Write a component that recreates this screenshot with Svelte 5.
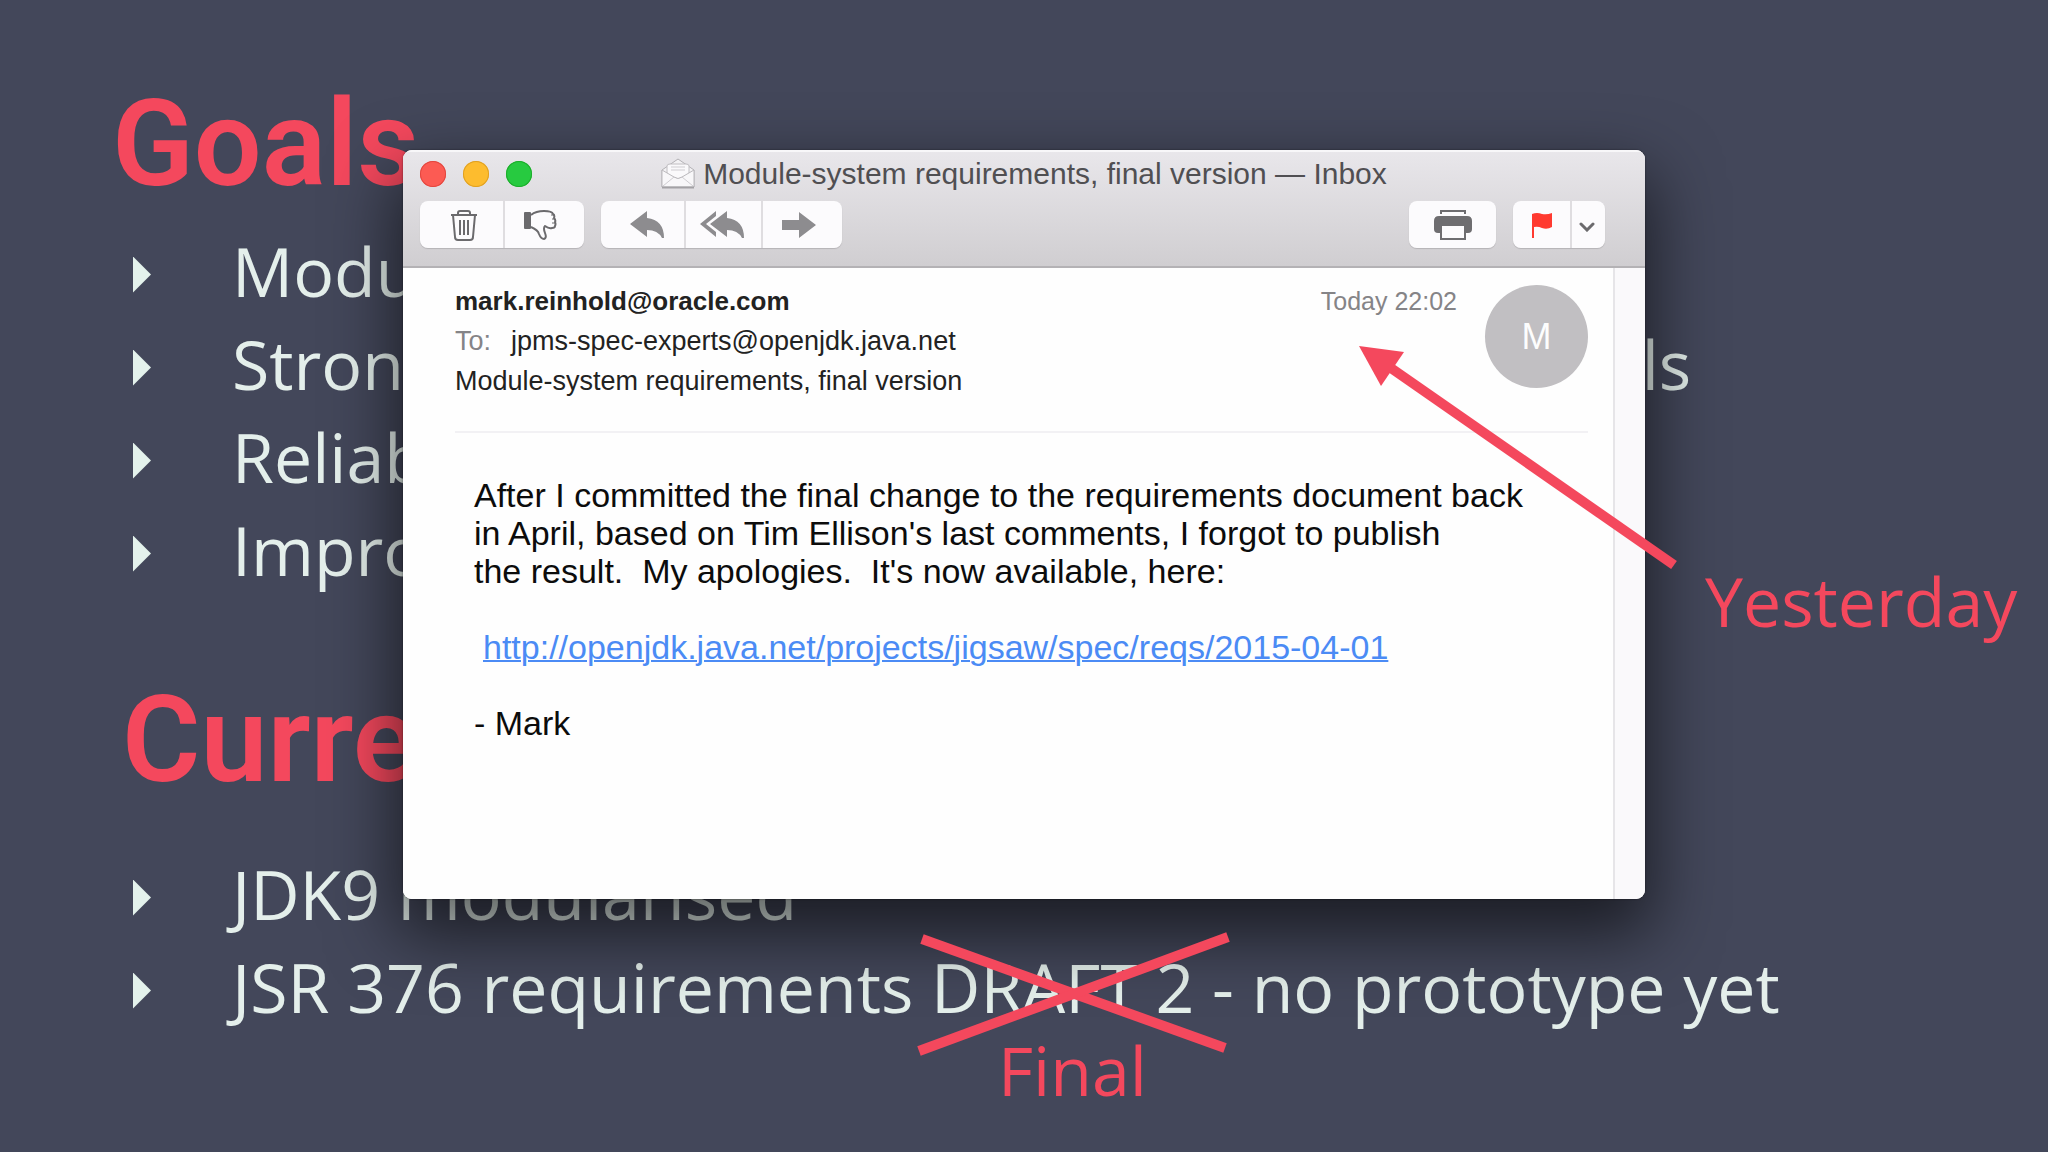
<script lang="ts">
  const goals = [
    "Modularity",
    "Strong encapsulation for all platform internals",
    "Reliable",
    "Improved",
  ];

  const paragraph = [
    "After I committed the final change to the requirements document back",
    "in April, based on Tim Ellison's last comments, I forgot to publish",
    "the result.  My apologies.  It's now available, here:",
  ].join("\n");

  const specUrl = "http://openjdk.java.net/projects/jigsaw/spec/reqs/2015-04-01";
</script>

<main class="slide">
  <section class="topic">
    <h1>Goals</h1>
    <ul>
      {#each goals as goal}
        <li>{goal}</li>
      {/each}
    </ul>
  </section>

  <section class="topic status">
    <h1>Current</h1>
    <ul>
      <li>JDK9 modularised</li>
      <li>JSR 376 requirements DRAFT 2 - no prototype yet</li>
    </ul>
  </section>

  <article class="window">
    <header class="chrome">
      <div class="titlebar">
        <div class="lights">
          <button class="light close" aria-label="Close"></button>
          <button class="light minimise" aria-label="Minimise"></button>
          <button class="light zoom" aria-label="Zoom"></button>
        </div>
        <h2>
          <svg width="34" height="32" viewBox="0 0 34 32" aria-hidden="true">
            <path d="M1 12 L17 1 L33 12 V29 H1Z" fill="#f3f2f4" stroke="#b3b1b5" />
            <path d="M6 17 V8 Q6 6 9 6 H25 Q28 6 28 8 V17 L17 21Z" fill="#faf9fb" stroke="#c0bec2" />
            <path d="M10 9 H24 M10 12 H24" stroke="#cfcdd1" />
            <path d="M1 12 L13 19 Q17 22 21 19 L33 12 V29 H1Z" fill="#f8f7f9" stroke="#bbb9bd" />
            <path d="M2 28 L13 19 M32 28 L21 19" stroke="#cfcdd1" fill="none" />
            <path d="M1 29.5 H33" stroke="#a3a1a5" stroke-width="2" />
          </svg>
          Module-system requirements, final version — Inbox
        </h2>
      </div>

      <div class="toolbar">
        <div class="group">
          <button class="trash" aria-label="Delete">
            <svg width="28" height="32" viewBox="0 0 28 32" fill="none" stroke="#6b6a6d" stroke-width="2">
              <path d="M1 6 H27" />
              <path d="M8 6 V4 Q8 2 10 2 H18 Q20 2 20 4 V6" />
              <path d="M3 6 L5 28 Q5 31 8 31 H20 Q23 31 23 28 L25 6" />
              <path d="M10 11 V26 M14 11 V26 M18 11 V26" />
            </svg>
          </button>
          <button class="junk" aria-label="Junk">
            <svg width="33" height="30" viewBox="0 0 33 30" fill="none" stroke="#6b6a6d" stroke-width="2" stroke-linejoin="round">
              <path d="M1 3 H6 V18 H1Z" fill="#6b6a6d" />
              <path d="M7 5 Q12 1 20 1 Q28 1 29 4 Q31 5 30 8 Q32 10 31 12 Q32 14 31 16 Q31 18 28 18 Q25 19 21 16 Q19 18 21 23 Q23 28 20 29 Q17 29 15 24 Q14 20 7 17" />
              <path d="M27 5 H30 M28 9 H31 M28 13 H31" stroke-width="1" />
            </svg>
          </button>
        </div>
        <div class="group">
          <button class="reply" aria-label="Reply">
            <svg width="34" height="28" viewBox="0 0 34 28" fill="#8d8c8f">
              <path d="M0 13 L17 0 V7 Q34 9 34 27 H32 Q28 19 17 19 V26Z" />
            </svg>
          </button>
          <button class="reply-all" aria-label="Reply all">
            <svg width="44" height="28" viewBox="0 0 44 28" fill="#8d8c8f">
              <path d="M0 13 L16 0 V5 L6 13 L16 21 V26Z" />
              <path d="M10 13 L27 0 V7 Q44 9 44 27 H42 Q38 19 27 19 V26Z" />
            </svg>
          </button>
          <button class="forward" aria-label="Forward">
            <svg width="34" height="26" viewBox="0 0 34 26" fill="#8d8c8f">
              <path d="M0 8 H17 V0 L34 13 L17 26 V18 H0Z" />
            </svg>
          </button>
        </div>
        <div class="group push">
          <button class="print" aria-label="Print">
            <svg width="40" height="32" viewBox="0 0 40 32" fill="none" stroke="#6e6d70" stroke-width="2">
              <path d="M8 5 V2 H32 V5" />
              <path d="M6 7 H34 Q39 7 39 12 V20 Q39 24 35 24 H5 Q1 24 1 20 V12 Q1 7 6 7Z" fill="#6e6d70" stroke="none" />
              <path d="M8 16 H32 V30 H8Z" fill="#fcfbfd" />
            </svg>
          </button>
        </div>
        <div class="group">
          <button class="flag" aria-label="Flag">
            <svg width="22" height="26" viewBox="0 0 22 26" fill="#ff3a30">
              <path d="M1 2 Q6 0 11 2 Q16 3 21 1 V15 Q16 18 11 16 Q7 14 3 15 V26 H1Z" />
            </svg>
          </button>
          <button class="more" aria-label="Flag colours">
            <svg width="16" height="10" viewBox="0 0 16 10" fill="none" stroke="#6b6a6d" stroke-width="3" stroke-linecap="round">
              <path d="M2 2 L8 8 L14 2" />
            </svg>
          </button>
        </div>
      </div>
    </header>

    <div class="message">
      <div class="pane">
        <div class="meta">
          <div class="who">
            <strong>mark.reinhold@oracle.com</strong>
            <span><span class="label">To:</span>jpms-spec-experts@openjdk.java.net</span>
            <span>Module-system requirements, final version</span>
          </div>
          <time>Today 22:02</time>
          <div class="avatar">M</div>
        </div>
        <div class="content">
          <p>{paragraph}</p>
          <p class="link"><a href={specUrl}>{specUrl}</a></p>
          <p>- Mark</p>
        </div>
      </div>
    </div>
  </article>

  <svg class="marks" width="2048" height="1152" viewBox="0 0 2048 1152" aria-hidden="true">
    <g stroke="#f4485d" stroke-width="10">
      <path d="M922 939 L1225 1048" />
      <path d="M919 1051 L1228 937" />
      <path d="M1388 366 L1674 565" />
    </g>
    <path d="M1359 346 L1404 352 L1381 386Z" fill="#f4485d" />
  </svg>
  <span class="note final">Final</span>
  <span class="note yesterday">Yesterday</span>
</main>

<style>
  :global(body) {
    background: #43475a;
  }

  .slide {
    position: relative;
    box-sizing: border-box;
    min-height: 100vh;
    padding: 64px 112px 0;
    overflow: hidden;
    background: #43475a;
    color: #e4efeb;
    font-family: "Open Sans", sans-serif;
    font-size: 68px;
    line-height: 93px;
  }

  h1 {
    margin: 0;
    color: #f4485d;
    font-family: Roboto, sans-serif;
    font-size: 120px;
    font-weight: 600;
    line-height: 160px;
  }

  .status {
    margin-top: 64px;
  }

  .status h1 {
    padding-left: 10px;
  }

  ul {
    margin: 0;
    padding: 0;
    list-style: none;
  }

  .status ul {
    margin-top: 27px;
  }

  li {
    display: flex;
    align-items: center;
    padding-left: 21px;
    white-space: nowrap;
  }

  li::before {
    content: "";
    width: 18px;
    height: 36px;
    margin-top: 8px;
    margin-right: 81px;
    background: #e4f2ec;
    clip-path: polygon(0 0, 100% 50%, 0 100%);
  }

  .window {
    position: absolute;
    top: 150px;
    left: 403px;
    right: 403px;
    overflow: hidden;
    border-radius: 9px;
    background: #fefefe;
    box-shadow:
      0 0 2px rgba(0, 0, 0, 0.5),
      0 30px 68px 6px rgba(0, 0, 0, 0.6);
    color: #222;
    font-family: "Liberation Sans", Arial, sans-serif;
    font-size: 27px;
    line-height: 40px;
  }

  .chrome {
    padding: 0 17px 18px;
    border-bottom: 2px solid #b4b2b5;
    background: linear-gradient(#e9e7eb, #d0ced1);
    box-shadow: inset 0 2px #f8f7f9;
  }

  .titlebar {
    display: grid;
    grid-template-columns: 1fr auto 1fr;
    align-items: center;
    height: 48px;
    margin-bottom: 3px;
  }

  .lights {
    display: flex;
    gap: 17px;
  }

  button {
    display: flex;
    align-items: center;
    justify-content: center;
    padding: 0;
    border: 0;
    background: #fcfbfd;
  }

  .light {
    width: 26px;
    height: 26px;
    border-radius: 50%;
  }

  .close {
    background: #fc5b53;
    box-shadow: inset 0 0 0 1px #e2473f;
  }

  .minimise {
    background: #fdbc2e;
    box-shadow: inset 0 0 0 1px #dfa023;
  }

  .zoom {
    background: #27ca40;
    box-shadow: inset 0 0 0 1px #1dad2b;
  }

  h2 {
    display: flex;
    align-items: center;
    gap: 8px;
    margin: 0;
    color: #504f52;
    font-size: 30px;
    font-weight: 400;
    white-space: nowrap;
  }

  .toolbar {
    display: flex;
    gap: 17px;
    padding-right: 23px;
  }

  .push {
    margin-left: auto;
  }

  .group {
    display: flex;
    height: 47px;
    overflow: hidden;
    border-radius: 8px;
    box-shadow: 0 1px 1px #b5b3b6;
  }

  .group button + button {
    border-left: 2px solid #dfdde0;
  }

  .trash {
    width: 83px;
    padding-left: 4px;
  }

  .junk {
    width: 81px;
    padding-right: 8px;
  }

  .reply {
    width: 83px;
    padding-left: 8px;
  }

  .reply-all {
    width: 77px;
    padding-right: 4px;
  }

  .forward {
    width: 81px;
    padding-right: 8px;
  }

  .print {
    width: 87px;
  }

  .flag {
    width: 57px;
  }

  .more {
    width: 35px;
    padding-top: 4px;
    padding-right: 4px;
  }

  .message {
    padding-right: 30px;
    background: #faf9fb;
  }

  .pane {
    min-height: 631px;
    box-sizing: border-box;
    padding: 13px 25px 0 52px;
    border-right: 2px solid #e6e5e8;
    background: #fefefe;
  }

  .meta {
    display: flex;
    padding-bottom: 30px;
    border-bottom: 2px solid #f2f1f4;
  }

  .who {
    display: flex;
    flex: 1;
    flex-direction: column;
  }

  strong {
    font-size: 26px;
  }

  .label {
    margin-right: 20px;
    color: #858487;
  }

  time {
    margin-right: 28px;
    color: #858487;
    font-size: 25px;
  }

  .avatar {
    width: 103px;
    height: 103px;
    margin-top: 4px;
    border-radius: 50%;
    background: #c1bfc2;
    color: #fdfdfd;
    font-size: 36px;
    line-height: 103px;
    text-align: center;
  }

  .content {
    padding: 43px 0 0 19px;
    color: #0c0c0c;
    font-size: 34px;
    line-height: 38px;
  }

  p {
    margin: 0 0 38px;
    white-space: pre;
  }

  .link {
    padding-left: 9px;
  }

  a {
    color: #4b8bf5;
    text-decoration: underline;
    text-decoration-thickness: 2px;
  }

  .marks {
    position: absolute;
    top: 0;
    left: 0;
    pointer-events: none;
  }

  .note {
    position: absolute;
    color: #f4485d;
  }

  .final {
    top: 1023px;
    left: 998px;
  }

  .yesterday {
    top: 554px;
    left: 1705px;
  }
</style>
